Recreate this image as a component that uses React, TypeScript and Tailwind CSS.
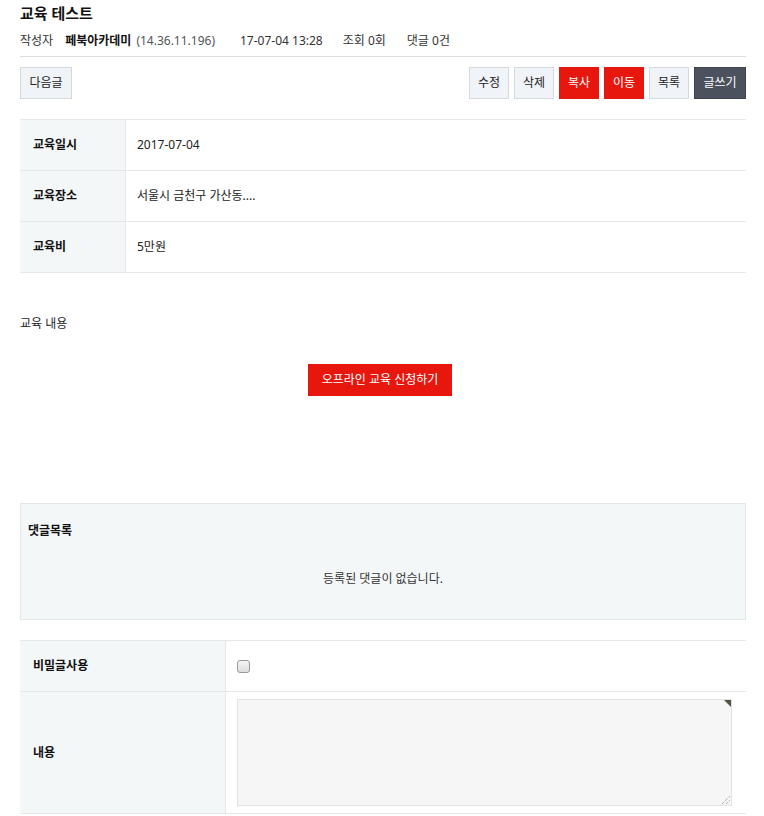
const font = { fontFamily: '"Noto Sans", "Noto Sans CJK KR", sans-serif' };

function Btn({ children, kind = "light", w = "w-[40px]" }: { children: React.ReactNode; kind?: "light" | "red" | "dark"; w?: string }) {
  const cls =
    kind === "red"
      ? "bg-[#e8170e] border-[#e8170e] text-white"
      : kind === "dark"
      ? "bg-[#4b515d] border-[#3e434d] text-white"
      : "bg-[#f0f3f7] border-[#d6d9dc] text-[#222]";
  return (
    <button className={`h-[32px] ${w} border text-[12px] leading-none ${cls}`}>{children}</button>
  );
}

function InfoRow({ label, value }: { label: string; value: string }) {
  return (
    <div className="flex h-[51px] border-b border-[#e7e7e7]">
      <div className="w-[106px] bg-[#f4f7f8] border-r border-[#e7e7e7] flex items-center pl-[13px] text-[12px] font-bold text-[#111]">
        {label}
      </div>
      <div className="flex-1 flex items-center pl-[11px] text-[12px] text-[#222]">{value}</div>
    </div>
  );
}

export default function App() {
  return (
    <div className="w-[764px] h-[816px] bg-white overflow-hidden" style={font}>
      <div className="mx-[20px] w-[726px]">
        <h1 className="h-[26px] flex items-center text-[15px] font-bold text-[#111]">교육 테스트</h1>
        <div className="h-[31px] flex items-center text-[12px] text-[#333] border-b border-[#ddd]">
          <span>작성자</span>
          <span className="ml-[12px] font-bold text-[#111]">페북아카데미</span>
          <span className="ml-[5px] text-[#555]">(14.36.11.196)</span>
          <span className="ml-[25px]">17-07-04 13:28</span>
          <span className="ml-[20px]">조회 0회</span>
          <span className="ml-[21px]">댓글 0건</span>
        </div>
        <div className="flex justify-between mt-[10px]">
          <Btn w="w-[52px]">다음글</Btn>
          <div className="flex gap-[5px]">
            <Btn>수정</Btn>
            <Btn>삭제</Btn>
            <Btn kind="red">복사</Btn>
            <Btn kind="red">이동</Btn>
            <Btn>목록</Btn>
            <Btn kind="dark" w="w-[52px]">글쓰기</Btn>
          </div>
        </div>

        <div className="mt-[20px] border-t border-[#e7e7e7]">
          <InfoRow label="교육일시" value="2017-07-04" />
          <InfoRow label="교육장소" value="서울시 금천구 가산동...." />
          <InfoRow label="교육비" value="5만원" />
        </div>

        <div className="mt-[42px] text-[12px] text-[#222] h-[18px] flex items-center">교육 내용</div>
        <div className="flex mt-[31px]">
          <button className="ml-[288px] h-[32px] w-[144px] bg-[#e8170e] text-white text-[12px]">오프라인 교육 신청하기</button>
        </div>

        <div className="mt-[107px] h-[117px] border border-[#e3e6e8] bg-[#f4f7f8] flex flex-col">
          <div className="pl-[7px] pt-[18px] h-[40px] text-[12px] font-bold text-[#111]">댓글목록</div>
          <div className="flex-1 flex items-center justify-center pb-[6px] text-[12px] text-[#333]">
            등록된 댓글이 없습니다.
          </div>
        </div>

        <div className="mt-[20px] border-t border-[#e7e7e7]">
          <div className="flex h-[51px] border-b border-[#e7e7e7]">
            <div className="w-[206px] bg-[#f4f7f8] border-r border-[#e7e7e7] flex items-center pl-[13px] text-[12px] font-bold text-[#111]">
              비밀글사용
            </div>
            <div className="flex-1 flex items-center pl-[11px]">
              <span className="w-[13px] h-[13px] rounded-[3px] border border-[#999] bg-gradient-to-b from-[#f4f4f4] to-[#dcdcdc]" />
            </div>
          </div>
          <div className="flex h-[122px] border-b border-[#e7e7e7]">
            <div className="w-[206px] bg-[#f4f7f8] border-r border-[#e7e7e7] flex items-center pl-[13px] text-[12px] font-bold text-[#111]">
              내용
            </div>
            <div className="flex-1 pl-[11px] pt-[7px]">
              <div className="relative w-[495px] h-[107px] border border-[#e3e3e3] bg-[#f6f6f6]">
                <svg className="absolute top-0 right-0" width="7" height="7" viewBox="0 0 7 7">
                  <polygon points="0,0 7,0 7,7" fill="#4f5244" />
                </svg>
                <svg className="absolute bottom-[1px] right-[1px]" width="9" height="9" viewBox="0 0 9 9">
                  <line x1="1" y1="9" x2="9" y2="1" stroke="#888" strokeWidth="1" strokeDasharray="1 1" />
                  <line x1="5" y1="9" x2="9" y2="5" stroke="#888" strokeWidth="1" strokeDasharray="1 1" />
                </svg>
              </div>
            </div>
          </div>
        </div>
      </div>
    </div>
  );
}
